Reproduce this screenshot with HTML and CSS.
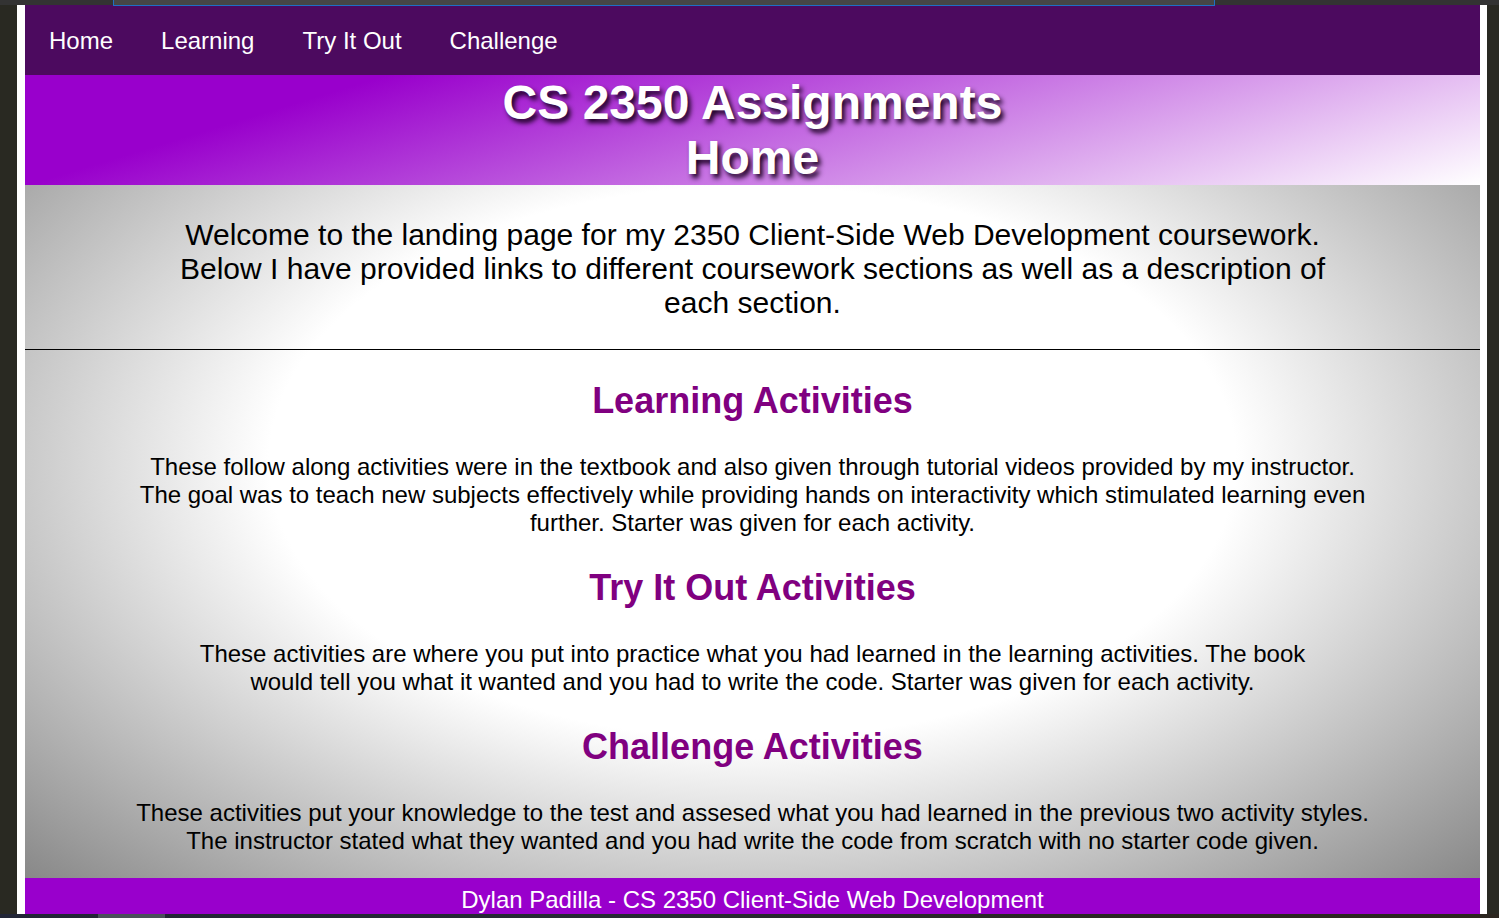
FILE: index.html
```html
<!DOCTYPE html>
<html lang="en">
<head>
<meta charset="utf-8">
<title>CS 2350 Assignments - Home</title>
<link rel="stylesheet" href="styles.css">
</head>
<body>
<div class="topbar"><div class="tab"></div></div>
<div class="page">
  <nav class="nav">
    <a href="#">Home</a>
    <a href="#">Learning</a>
    <a href="#">Try It Out</a>
    <a href="#">Challenge</a>
  </nav>
  <header class="banner">
    <h1>CS 2350 Assignments<br>Home</h1>
  </header>
  <main class="content">
    <section class="intro">
      <p>Welcome to the landing page for my 2350 Client-Side Web Development coursework. Below I have provided links to different coursework sections as well as a description of each section.</p>
    </section>
    <section class="activities">
      <h2>Learning Activities</h2>
      <p>These follow along activities were in the textbook and also given through tutorial videos provided by my instructor. The goal was to teach new subjects effectively while providing hands on interactivity which stimulated learning even further. Starter was given for each activity.</p>
      <h2>Try It Out Activities</h2>
      <p>These activities are where you put into practice what you had learned in the learning activities. The book<br>would tell you what it wanted and you had to write the code. Starter was given for each activity.</p>
      <h2>Challenge Activities</h2>
      <p>These activities put your knowledge to the test and assesed what you had learned in the previous two activity styles. The instructor stated what they wanted and you had write the code from scratch with no starter code given.</p>
    </section>
  </main>
  <footer class="footer">Dylan Padilla - CS 2350 Client-Side Web Development</footer>
</div>
<div class="taskbar"><div class="task"></div></div>
</body>
</html>
```
FILE: styles.css
```css
html, body {
  margin: 0;
  padding: 0;
}

body {
  background: #292922;
  font-family: "Liberation Sans", Arial, sans-serif;
  overflow: hidden;
}

.topbar {
  height: 5px;
  background: #333333;
}

.tab {
  margin-left: 113px;
  width: 1102px;
  height: 6px;
  box-sizing: border-box;
  background: #464646;
  border: 1px solid #1f6fc6;
  border-top: none;
  position: relative;
  z-index: 2;
}

.page {
  margin: 0 12px 0 17px;
  padding: 0 7px 0 8px;
  background: #ffffff;
}

.nav {
  display: flex;
  align-items: center;
  height: 70px;
  box-sizing: border-box;
  padding-top: 2px;
  background: #4c0a5f;
}

.nav a {
  padding: 0 24px;
  color: #ffffff;
  text-decoration: none;
  font-size: 24px;
}

.banner {
  background: linear-gradient(163deg, #9900cc 20%, #ffffff 100%);
  text-align: center;
}

.banner h1 {
  margin: 0;
  font-size: 48px;
  line-height: 55px;
  font-weight: bold;
  color: #ffffff;
  text-shadow: 3px 4px 5px #1a0020;
}

.content {
  display: block;
  background: radial-gradient(ellipse at 50% 40%, #ffffff 47%, #888888 100%);
}

.intro {
  display: flow-root;
  border-bottom: 1px solid #000000;
}

.intro p {
  width: 80%;
  margin: 33px auto 29px;
  font-size: 30px;
  line-height: 34px;
  text-align: center;
  color: #000000;
}

.activities {
  display: flow-root;
  text-align: center;
  font-size: 24px;
}

.activities h2 {
  margin: 30px 0 32px;
  font-size: 36px;
  line-height: 41px;
  font-weight: bold;
  color: #800080;
}

.activities p {
  width: 85%;
  margin: 24px auto;
  line-height: 28px;
  color: #000000;
}

.activities p:last-child {
  margin-bottom: 23px;
}

.footer {
  height: 36px;
  box-sizing: border-box;
  padding-top: 8px;
  background: #9900cc;
  color: #ffffff;
  font-size: 24px;
  line-height: 27px;
  text-align: center;
}

.taskbar {
  height: 4px;
  background: linear-gradient(90deg, #212536 0%, #262a34 40%, #2a2724 70%, #2c261f 100%);
}

.task {
  margin-left: 98px;
  width: 67px;
  height: 4px;
  background: #4a505b;
}
```
